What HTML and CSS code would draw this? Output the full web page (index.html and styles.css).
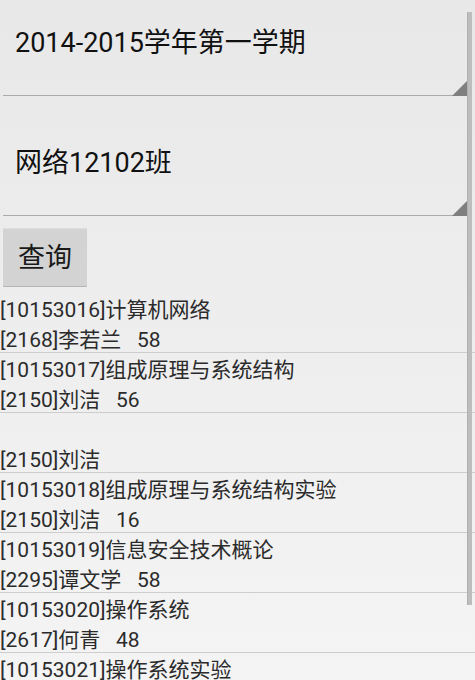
FILE: index.html
```html
<!DOCTYPE html>
<html lang="zh-CN">
<head>
<meta charset="utf-8">
<title>成绩查询</title>
<link rel="stylesheet" href="styles.css">
</head>
<body>
<div class="screen">
  <div class="spinner">
    <span class="spinner-text">2014-2015学年第一学期</span>
  </div>
  <div class="spinner">
    <span class="spinner-text">网络12102班</span>
  </div>
  <button class="query" type="button">查询</button>
  <ul class="results">
    <li class="item"><div class="line">[10153016]计算机网络</div><div class="line">[2168]李若兰   58</div></li>
    <li class="item"><div class="line">[10153017]组成原理与系统结构</div><div class="line">[2150]刘洁   56</div></li>
    <li class="item"><div class="line"></div><div class="line">[2150]刘洁</div></li>
    <li class="item"><div class="line">[10153018]组成原理与系统结构实验</div><div class="line">[2150]刘洁   16</div></li>
    <li class="item"><div class="line">[10153019]信息安全技术概论</div><div class="line">[2295]谭文学   58</div></li>
    <li class="item"><div class="line">[10153020]操作系统</div><div class="line">[2617]何青   48</div></li>
    <li class="item"><div class="line">[10153021]操作系统实验</div><div class="line">[2617]何青   50</div></li>
  </ul>
  <div class="scrollbar"></div>
</div>
</body>
</html>
```

FILE: styles.css
```css
html, body {
  margin: 0;
  padding: 0;
  height: 100%;
  overflow: hidden;
}

body {
  background: linear-gradient(to bottom, #e8e8e8 0%, #eeeeee 50%, #f4f4f4 100%);
  font-family: Roboto, "Noto Sans CJK SC", sans-serif;
}

.screen {
  position: relative;
  width: 475px;
  height: 680px;
  overflow: hidden;
}

.spinner {
  position: relative;
  box-sizing: border-box;
  height: 96px;
  margin: 0 5px 24px 3px;
  padding: 28px 0 0 12px;
  border-bottom: 1px solid #ababab;
  font-size: 27px;
  line-height: 30px;
  color: #111;
}

.spinner::after {
  content: "";
  position: absolute;
  right: 0;
  bottom: -1px;
  width: 18px;
  height: 18px;
  background: #7f7f7f;
  clip-path: polygon(100% 0, 100% 100%, 0 100%);
}

.spinner + .spinner {
  margin-bottom: 12px;
}

.query {
  display: block;
  box-sizing: border-box;
  width: 84px;
  height: 58px;
  margin: 0 0 7px 3px;
  padding: 0;
  border: none;
  border-top: 1px solid #dedede;
  border-radius: 1px;
  background: #d3d3d3;
  box-shadow: 0 1px 0 #b4b4b4;
  font-family: Roboto, "Noto Sans CJK SC", sans-serif;
  font-size: 27px;
  line-height: 30px;
  color: #1a1a1a;
}

.results {
  list-style: none;
  margin: 0;
  padding: 0;
}

.item {
  height: 57px;
  padding-top: 2px;
  border-bottom: 1px solid #cdcdcd;
  font-size: 21px;
  color: #2b2b2b;
  white-space: pre;
}

.line {
  height: 30px;
  line-height: 30px;
}

.scrollbar {
  position: absolute;
  left: 467px;
  top: 12px;
  width: 5px;
  height: 593px;
  background: #bdbdbd;
  border-left: 1px solid #b0b0b0;
  box-sizing: border-box;
}
```
